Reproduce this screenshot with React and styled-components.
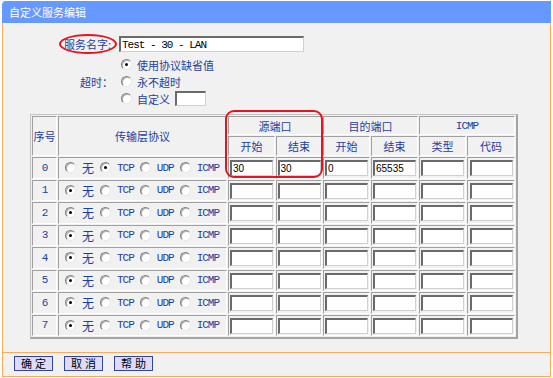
import React from 'react';
import styled, { createGlobalStyle } from 'styled-components';

const GlobalStyle = createGlobalStyle`
    body {
        margin: 0;
        background: #fff;
        font-family: 'Noto Sans CJK SC', 'Liberation Sans', sans-serif;
    }
`;

const Page = styled.div`
    width: 549px;
    padding: 1px 0 0 2px;
`;

const TitleBar = styled.div`
    height: 22px;
    line-height: 22px;
    padding-left: 7px;
    background: #6699ff;
    border-radius: 4px 0 0 0;
    color: #fff;
    font-size: 11px;
`;

const Panel = styled.div`
    box-sizing: border-box;
    border: 1px solid #ffaa5a;
    border-top: none;
    background: #f1f1f1;
`;

const Form = styled.div`
    display: grid;
    grid-template-columns: 110px auto;
    column-gap: 6px;
    row-gap: 4px;
    align-items: center;
    padding-top: 13px;
`;

const Label = styled.span`
    position: relative;
    justify-self: end;
    padding-right: ${p => (p.$pad ? 2 : 0)}px;
    color: #1d3f9e;
    font-size: 11px;
    line-height: 16px;
`;

const Ellipse = styled.span`
    position: absolute;
    left: -5px;
    right: -4px;
    top: -2px;
    bottom: -2px;
    border: 2px solid #e5141e;
    border-radius: 50%;
`;

const TextInput = styled.input`
    box-sizing: border-box;
    width: ${p => p.$w}px;
    height: ${p => p.$h || 16}px;
    margin: 0;
    padding: 0 1px;
    border-style: solid;
    border-width: 2px 1px 1px 2px;
    border-color: #6a6a6a #d0d0d0 #d0d0d0 #6a6a6a;
    background: #fff;
    color: #000;
    font-family: ${p => (p.$mono ? "'Liberation Mono', monospace" : "'Liberation Sans', sans-serif")};
    font-size: ${p => (p.$mono ? 11 : 10)}px;
    letter-spacing: ${p => (p.$mono ? -1 : 0)}px;
    outline: none;
`;

const Choices = styled.div`
    display: flex;
    flex-direction: column;
`;

const ChoiceLine = styled.div`
    display: flex;
    align-items: center;
    gap: 5px;
    height: 17px;
    padding-left: 2px;
    color: #1d3f9e;
    font-size: 11px;
`;

const Radio = styled.span`
    box-sizing: border-box;
    position: relative;
    flex: none;
    width: 11px;
    height: 11px;
    border-radius: 50%;
    border: 1px solid;
    border-color: #808080 #e8e8e8 #e8e8e8 #808080;
    background: #fff;
    box-shadow: inset 1px 1px 0 #b0b0b0;

    &::after {
        content: '';
        display: ${p => (p.$on ? 'block' : 'none')};
        position: absolute;
        left: 3px;
        top: 3px;
        width: 3px;
        height: 3px;
        border-radius: 50%;
        background: #000;
    }
`;

const TableWrap = styled.div`
    position: relative;
    margin: 7px 0 0 27px;
    width: 488px;
`;

const Marker = styled.div`
    position: absolute;
    left: 195px;
    top: -4px;
    width: 98px;
    height: 68px;
    box-sizing: border-box;
    border: 2px solid #e5141e;
    border-radius: 9px;
    pointer-events: none;
`;

const Grid = styled.table`
    width: 488px;
    table-layout: fixed;
    border-collapse: separate;
    border-spacing: 1px;
    border-style: solid;
    border-width: 1px 2px 2px 1px;
    border-color: #c4c4c4 #a4a4a4 #a4a4a4 #c4c4c4;
`;

const Cell = styled.td`
    padding: 0;
    border: 1px solid;
    border-color: #a0a0a0 #fff #fff #a0a0a0;
    text-align: center;
    color: #1d3f9e;
    font-size: 11px;
    font-family: ${p => (p.$mono ? "'Liberation Mono', monospace" : 'inherit')};
    letter-spacing: ${p => (p.$mono ? -1 : 0)}px;
    white-space: nowrap;
`;

const HeadRow = styled.tr`
    height: ${p => p.$h}px;
`;

const DataRow = styled.tr`
    height: 21.5px;
`;

const Protocols = styled.div`
    display: flex;
    align-items: center;
    padding-left: 6px;
`;

const Option = styled.span`
    display: flex;
    align-items: center;
    gap: 6px;
    margin-right: 6px;
`;

const OptionText = styled.span`
    font-family: ${p => (p.$mono ? "'Liberation Mono', monospace" : 'inherit')};
    font-size: ${p => (p.$mono ? 11 : 12)}px;
    letter-spacing: ${p => (p.$mono ? -1 : 0)}px;
`;

const Divider = styled.div`
    margin-top: 13px;
    height: 1px;
    background: #ffaa5a;
`;

const Footer = styled.div`
    display: flex;
    gap: 11px;
    padding: 3px 11px 5px;
`;

const Button = styled.button`
    box-sizing: border-box;
    width: 39px;
    height: 15px;
    padding: 0;
    border: 1px solid #33459f;
    background: #dcdcfa;
    color: #000;
    font-family: 'Noto Sans CJK SC', sans-serif;
    font-size: 11px;
    line-height: 13px;
    letter-spacing: 3px;
    text-indent: 3px;
`;

const rows = [
    { no: 0, proto: 'TCP', ports: ['30', '30', '0', '65535', '', ''] },
    ...Array.from({ length: 7 }, (_, i) => ({ no: i + 1, proto: '无', ports: ['', '', '', '', '', ''] })),
];

const protocols = ['无', 'TCP', 'UDP', 'ICMP'];

const App = () => (
    <Page>
        <GlobalStyle />
        <TitleBar>自定义服务编辑</TitleBar>
        <Panel>
            <Form>
                <Label $pad>
                    服务名字:
                    <Ellipse />
                </Label>
                <TextInput $w={185} $mono defaultValue="Test - 30 - LAN" />
                <Label>超时：</Label>
                <Choices>
                    <ChoiceLine>
                        <Radio $on />
                        使用协议缺省值
                    </ChoiceLine>
                    <ChoiceLine>
                        <Radio />
                        永不超时
                    </ChoiceLine>
                    <ChoiceLine>
                        <Radio />
                        自定义
                        <TextInput $w={31} $h={15} />
                    </ChoiceLine>
                </Choices>
            </Form>

            <TableWrap>
                <Grid>
                    <colgroup>
                        <col style={{ width: 25 }} />
                        <col style={{ width: 169 }} />
                        <col style={{ width: 47 }} />
                        <col style={{ width: 46 }} />
                        <col style={{ width: 47 }} />
                        <col style={{ width: 47 }} />
                        <col style={{ width: 47 }} />
                        <col style={{ width: 48 }} />
                    </colgroup>
                    <tbody>
                        <HeadRow $h={19}>
                            <Cell rowSpan={2}>序号</Cell>
                            <Cell rowSpan={2}>传输层协议</Cell>
                            <Cell colSpan={2}>源端口</Cell>
                            <Cell colSpan={2}>目的端口</Cell>
                            <Cell colSpan={2} $mono>ICMP</Cell>
                        </HeadRow>
                        <HeadRow $h={20}>
                            <Cell>开始</Cell>
                            <Cell>结束</Cell>
                            <Cell>开始</Cell>
                            <Cell>结束</Cell>
                            <Cell>类型</Cell>
                            <Cell>代码</Cell>
                        </HeadRow>
                        {rows.map(row => (
                            <DataRow key={row.no}>
                                <Cell $mono>{row.no}</Cell>
                                <Cell>
                                    <Protocols>
                                        {protocols.map(p => (
                                            <Option key={p}>
                                                <Radio $on={p === row.proto} />
                                                <OptionText $mono={p !== '无'}>{p}</OptionText>
                                            </Option>
                                        ))}
                                    </Protocols>
                                </Cell>
                                {row.ports.map((v, i) => (
                                    <Cell key={i}>
                                        <TextInput $w={43} defaultValue={v} />
                                    </Cell>
                                ))}
                            </DataRow>
                        ))}
                    </tbody>
                </Grid>
                <Marker />
            </TableWrap>

            <Divider />
            <Footer>
                <Button>确定</Button>
                <Button>取消</Button>
                <Button>帮助</Button>
            </Footer>
        </Panel>
    </Page>
);

export default App;
